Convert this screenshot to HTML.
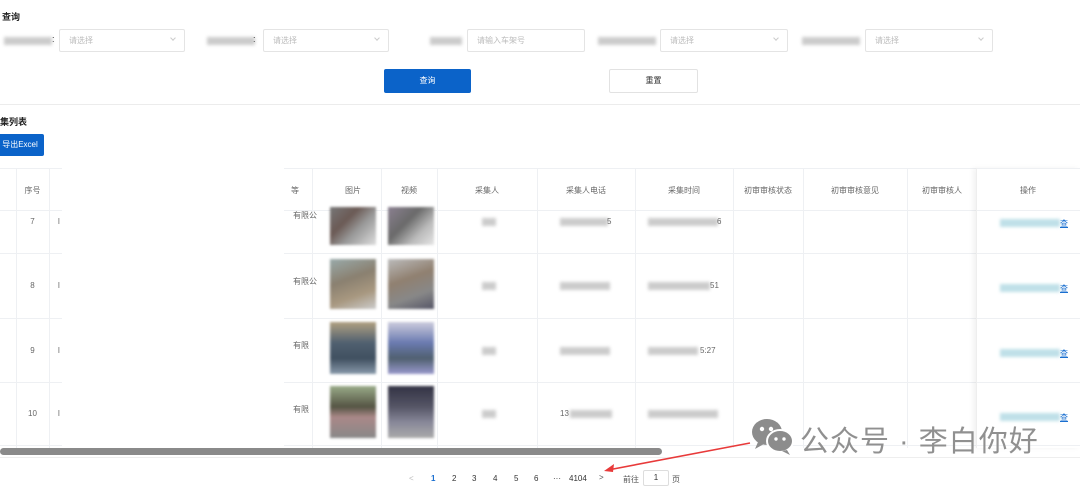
<!DOCTYPE html>
<html><head><meta charset="utf-8"><style>
*{margin:0;padding:0;box-sizing:border-box}
body{width:1080px;height:482px;overflow:hidden;background:#fff;font-family:"Liberation Sans","Noto Sans CJK SC",sans-serif;font-size:9px;color:#555;position:relative}
.a{position:absolute}
.blur{background:#ccc;filter:blur(1.5px);height:8px}
.sel{position:absolute;top:29px;height:23px;border:1px solid #e4e4e4;border-radius:2px;color:#bbb;font-size:8px;padding:5px 9px}
.sel i{position:absolute;right:9px;top:6px;width:4px;height:4px;border-right:1px solid #ccc;border-bottom:1px solid #ccc;transform:rotate(45deg)}
.vl{position:absolute;width:1px;background:#eef0f3}
.hl{position:absolute;height:1px;background:#eef0f3}
.th{position:absolute;top:185px;font-size:8px;color:#666;text-align:center}
.img{position:absolute;width:46px;filter:blur(1.2px)}
.c{position:absolute;text-align:center;font-size:8px;color:#666}
</style></head><body>
<div class="a" style="left:2px;top:10px;font-weight:bold;font-size:9px;color:#222">查询</div>
<div class="a blur" style="left:4px;top:37px;width:48px"></div><div class="a" style="left:52px;top:34px;color:#333">:</div>
<div class="sel" style="left:59px;width:126px">请选择<i></i></div>
<div class="a blur" style="left:207px;top:37px;width:48px"></div><div class="a" style="left:253px;top:34px;color:#333">:</div>
<div class="sel" style="left:263px;width:126px">请选择<i></i></div>
<div class="a blur" style="left:430px;top:37px;width:32px"></div>
<div class="sel" style="left:467px;width:118px">请输入车架号</div>
<div class="a blur" style="left:598px;top:37px;width:58px"></div>
<div class="sel" style="left:660px;width:128px">请选择<i></i></div>
<div class="a blur" style="left:802px;top:37px;width:58px"></div>
<div class="sel" style="left:865px;width:128px">请选择<i></i></div>
<div class="a" style="left:384px;top:69px;width:87px;height:24px;background:#0b63c9;border-radius:2px;color:#fff;text-align:center;line-height:24px;font-size:8px">查询</div>
<div class="a" style="left:609px;top:69px;width:89px;height:24px;border:1px solid #e2e2e2;border-radius:2px;color:#333;text-align:center;line-height:22px;font-size:8px">重置</div>
<div class="hl" style="left:0;top:104px;width:1080px;background:#ececec"></div>
<div class="a" style="left:0;top:115px;font-weight:bold;color:#222;font-size:9px">集列表</div>
<div class="a" style="left:-4px;top:134px;width:48px;height:22px;background:#0b63c9;border-radius:2px;color:#fff;font-size:8px;line-height:22px;text-align:center">导出Excel</div>

<div class="hl" style="left:0;top:168px;width:1080px"></div>
<div class="hl" style="left:0;top:210px;width:1080px"></div>
<div class="hl" style="left:0;top:253px;width:1080px"></div>
<div class="hl" style="left:0;top:318px;width:1080px"></div>
<div class="hl" style="left:0;top:382px;width:1080px"></div>
<div class="hl" style="left:0;top:445px;width:1080px"></div>
<div class="a" style="left:62px;top:168px;width:222px;height:280px;background:#fff"></div>
<div class="vl" style="left:16px;top:168px;height:280px"></div>
<div class="vl" style="left:49px;top:168px;height:280px"></div>
<div class="vl" style="left:312px;top:168px;height:280px"></div>
<div class="vl" style="left:381px;top:168px;height:280px"></div>
<div class="vl" style="left:437px;top:168px;height:280px"></div>
<div class="vl" style="left:537px;top:168px;height:280px"></div>
<div class="vl" style="left:635px;top:168px;height:280px"></div>
<div class="vl" style="left:733px;top:168px;height:280px"></div>
<div class="vl" style="left:803px;top:168px;height:280px"></div>
<div class="vl" style="left:907px;top:168px;height:280px"></div>
<div class="a" style="left:976px;top:168px;width:104px;height:280px;border-left:1px solid #eee;box-shadow:-3px 0 5px rgba(0,0,0,.05)"></div>
<div class="th" style="left:16px;width:33px">序号</div>
<div class="th" style="left:290px;width:10px">等</div>
<div class="th" style="left:325px;width:56px">图片</div>
<div class="th" style="left:381px;width:56px">视频</div>
<div class="th" style="left:437px;width:100px">采集人</div>
<div class="th" style="left:537px;width:98px">采集人电话</div>
<div class="th" style="left:635px;width:98px">采集时间</div>
<div class="th" style="left:733px;width:70px">初审审核状态</div>
<div class="th" style="left:803px;width:104px">初审审核意见</div>
<div class="th" style="left:907px;width:70px">初审审核人</div>
<div class="th" style="left:976px;width:104px">操作</div>

<div class="c" style="left:16px;width:33px;top:217px">7</div>
<div class="c" style="left:16px;width:33px;top:281px">8</div>
<div class="c" style="left:16px;width:33px;top:346px">9</div>
<div class="c" style="left:16px;width:33px;top:409px">10</div>
<div class="c" style="left:58px;top:217px">l</div><div class="c" style="left:58px;top:281px">l</div><div class="c" style="left:58px;top:346px">l</div><div class="c" style="left:58px;top:409px">l</div>
<div class="c" style="left:293px;top:210px">有限公</div>
<div class="c" style="left:293px;top:276px">有限公</div>
<div class="c" style="left:293px;top:340px">有限</div>
<div class="c" style="left:293px;top:404px">有限</div>

<div class="img" style="left:330px;top:207px;height:38px;background:linear-gradient(135deg,#777 0%,#6b5a55 35%,#999 60%,#ddd 100%)"></div>
<div class="img" style="left:388px;top:207px;height:38px;background:linear-gradient(135deg,#8a8090 0%,#6a6a6a 40%,#bbb 70%,#e5e5e5 100%)"></div>
<div class="img" style="left:330px;top:259px;height:50px;background:linear-gradient(160deg,#9aa 0%,#8a8070 40%,#a89880 70%,#ccc 100%)"></div>
<div class="img" style="left:388px;top:259px;height:50px;background:linear-gradient(160deg,#bbb 0%,#908070 40%,#888 70%,#556 100%)"></div>
<div class="img" style="left:330px;top:322px;height:52px;background:linear-gradient(180deg,#b0a080 0%,#506070 40%,#405060 70%,#8899aa 100%)"></div>
<div class="img" style="left:388px;top:322px;height:52px;background:linear-gradient(180deg,#ccd 0%,#6a7ab0 40%,#506070 70%,#99c 100%)"></div>
<div class="img" style="left:330px;top:386px;height:52px;background:linear-gradient(180deg,#9a8 0%,#554 40%,#a88 60%,#888 100%)"></div>
<div class="img" style="left:388px;top:386px;height:52px;background:linear-gradient(180deg,#334 0%,#556 40%,#889 70%,#aaa 100%)"></div>

<div class="a blur" style="left:482px;top:218px;width:14px"></div>
<div class="a blur" style="left:482px;top:282px;width:14px"></div>
<div class="a blur" style="left:482px;top:347px;width:14px"></div>
<div class="a blur" style="left:482px;top:410px;width:14px"></div>
<div class="a blur" style="left:560px;top:218px;width:48px"></div><div class="c" style="left:607px;top:217px">5</div>
<div class="a blur" style="left:560px;top:282px;width:50px"></div>
<div class="a blur" style="left:560px;top:347px;width:50px"></div>
<div class="c" style="left:560px;top:409px">13</div><div class="a blur" style="left:570px;top:410px;width:42px"></div>
<div class="a blur" style="left:648px;top:218px;width:70px"></div><div class="c" style="left:717px;top:217px">6</div>
<div class="a blur" style="left:648px;top:282px;width:62px"></div><div class="c" style="left:710px;top:281px">51</div>
<div class="a blur" style="left:648px;top:347px;width:50px"></div><div class="c" style="left:700px;top:346px">5:27</div>
<div class="a blur" style="left:648px;top:410px;width:70px"></div>
<div class="a blur" style="left:1000px;top:219px;width:60px;background:#bfe0e8"></div><div class="c" style="left:1060px;top:218px;color:#1a6fd0;text-decoration:underline">查</div>
<div class="a blur" style="left:1000px;top:284px;width:60px;background:#bfe0e8"></div><div class="c" style="left:1060px;top:283px;color:#1a6fd0;text-decoration:underline">查</div>
<div class="a blur" style="left:1000px;top:349px;width:60px;background:#bfe0e8"></div><div class="c" style="left:1060px;top:348px;color:#1a6fd0;text-decoration:underline">查</div>
<div class="a blur" style="left:1000px;top:413px;width:60px;background:#bfe0e8"></div><div class="c" style="left:1060px;top:412px;color:#1a6fd0;text-decoration:underline">查</div>

<div class="a" style="left:0;top:448px;width:662px;height:7px;background:#8a8a8a;border-radius:4px"></div>
<div class="hl" style="left:0;top:457px;width:1080px;background:#eee"></div>

<svg class="a" style="left:750px;top:416px" width="46" height="42" viewBox="0 0 46 42">
<ellipse cx="17" cy="16" rx="15" ry="13" fill="#8c8c8c"/><path d="M8 26 L5 33 L14 28Z" fill="#8c8c8c"/>
<ellipse cx="30" cy="25" rx="13" ry="11" fill="#8c8c8c" stroke="#fff" stroke-width="2"/><path d="M37 34 L40 39 L32 35Z" fill="#8c8c8c"/>
<circle cx="12" cy="13" r="2.2" fill="#fff"/><circle cx="21" cy="13" r="2.2" fill="#fff"/>
<circle cx="26" cy="23" r="1.7" fill="#fff"/><circle cx="34" cy="23" r="1.7" fill="#fff"/></svg>
<div class="a" style="left:800px;top:418px;font-size:29px;color:#909090;letter-spacing:1px;white-space:nowrap">公众号 · 李白你好</div>
<svg class="a" style="left:600px;top:440px" width="160" height="40"><line x1="150" y1="3" x2="8" y2="30" stroke="#e83a3a" stroke-width="1.6"/><path d="M4 31 L14 24 L13 32Z" fill="#e83a3a"/></svg>

<div class="a" style="left:409px;top:474px;font-size:8px;color:#bbb">&lt;</div>
<div class="a" style="left:431px;top:474px;font-size:8px;color:#1a6fd0;font-weight:bold">1</div>
<div class="a" style="left:452px;top:474px;font-size:8px;color:#333">2</div>
<div class="a" style="left:472px;top:474px;font-size:8px;color:#333">3</div>
<div class="a" style="left:493px;top:474px;font-size:8px;color:#333">4</div>
<div class="a" style="left:514px;top:474px;font-size:8px;color:#333">5</div>
<div class="a" style="left:534px;top:474px;font-size:8px;color:#333">6</div>
<div class="a" style="left:553px;top:474px;font-size:8px;color:#333">···</div>
<div class="a" style="left:569px;top:474px;font-size:8px;color:#333">4104</div>
<div class="a" style="left:599px;top:473px;font-size:8px;color:#555">&gt;</div>
<div class="a" style="left:623px;top:474px;font-size:8px;color:#555">前往</div>
<div class="a" style="left:643px;top:470px;width:26px;height:16px;border:1px solid #ddd;border-radius:2px;font-size:8px;text-align:center;line-height:14px;color:#333">1</div>
<div class="a" style="left:672px;top:474px;font-size:8px;color:#555">页</div>
</body></html>
